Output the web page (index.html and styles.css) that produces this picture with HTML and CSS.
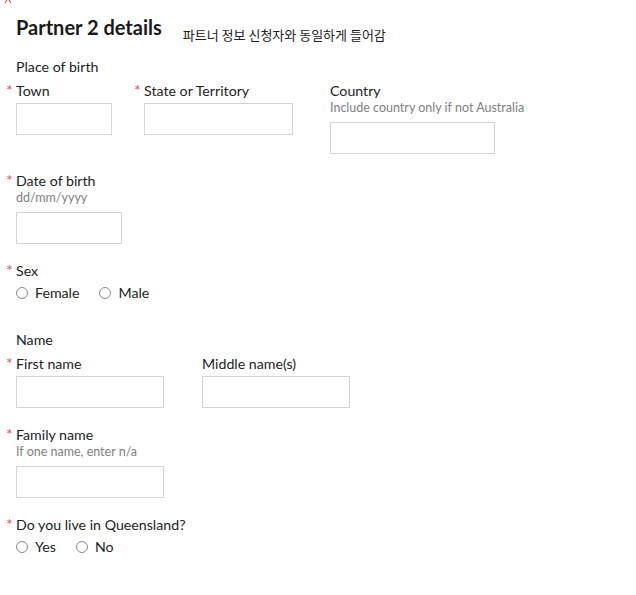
FILE: index.html
```html
<!DOCTYPE html>
<html lang="en">
<head>
    <meta charset="UTF-8"/>
    <meta name="viewport" content="width=device-width, initial-scale=1.0"/>
    <title>Partner 2 details</title>

    <link rel="stylesheet" href="styles.css">
</head>
<body>

<div class="cut-mark">
    <svg width="12" height="4" viewBox="0 0 12 4">
        <path d="M7 0 L5 3 M9 0 L11 3" stroke="#e05555" stroke-width="1.2" fill="none"/>
    </svg>
</div>

<main class="form">
    <div class="section-head">
        <h2>Partner 2 details</h2>
        <span class="note">파트너 정보 신청자와 동일하게 들어감</span>
    </div>

    <div class="group">
        <div class="group-title">Place of birth</div>
        <div class="row">
            <div class="field col-town">
                <label for="town" class="required">Town</label>
                <input type="text" id="town" class="input w-96"/>
            </div>
            <div class="field col-state">
                <label for="state" class="required">State or Territory</label>
                <input type="text" id="state" class="input w-149"/>
            </div>
            <div class="field">
                <label for="country">Country</label>
                <div class="hint">Include country only if not Australia</div>
                <input type="text" id="country" class="input w-165"/>
            </div>
        </div>
    </div>

    <div class="field">
        <label for="dob" class="required">Date of birth</label>
        <div class="hint">dd/mm/yyyy</div>
        <input type="text" id="dob" class="input w-106"/>
    </div>

    <div class="field">
        <label class="required">Sex</label>
        <div class="radio-row">
            <label class="radio"><span class="circle"></span>Female</label>
            <label class="radio"><span class="circle"></span>Male</label>
        </div>
    </div>

    <div class="group group-spaced">
        <div class="group-title">Name</div>
        <div class="row">
            <div class="field col-first">
                <label for="first-name" class="required">First name</label>
                <input type="text" id="first-name" class="input w-148"/>
            </div>
            <div class="field">
                <label for="middle-name">Middle name(s)</label>
                <input type="text" id="middle-name" class="input w-148"/>
            </div>
        </div>
    </div>

    <div class="field">
        <label for="family-name" class="required">Family name</label>
        <div class="hint">If one name, enter n/a</div>
        <input type="text" id="family-name" class="input w-148"/>
    </div>

    <div class="field">
        <label class="required">Do you live in Queensland?</label>
        <div class="radio-row">
            <label class="radio"><span class="circle"></span>Yes</label>
            <label class="radio"><span class="circle"></span>No</label>
        </div>
    </div>
</main>

</body>
</html>
```

FILE: styles.css
```css
:root {
    --text-color: #222222;
    --hint-color: #808080;
    --border-color: #d4d4d4;
    --required-color: #e05555;
}

* {
    margin: 0;
    padding: 0;
    box-sizing: border-box;
}

body {
    font-family: 'Lato', 'Open Sans', sans-serif;
    font-size: 14.2px;
    line-height: 18px;
    color: var(--text-color);
    background-color: #ffffff;
}

.cut-mark {
    height: 4px;
    overflow: hidden;
}

.cut-mark svg {
    display: block;
}

.form {
    padding: 11px 16px 0 16px;
}

.section-head {
    display: flex;
    align-items: flex-end;
    gap: 21px;
}

.section-head h2 {
    font-size: 20px;
    font-weight: 700;
    line-height: 24px;
    margin-bottom: 3px;
    color: #1a1a1a;
}

.note {
    font-family: 'Noto Sans CJK KR', sans-serif;
    font-size: 13px;
    line-height: 14px;
    color: #222222;
}

.group {
    margin-top: 16px;
}

.group-spaced {
    margin-top: 29px;
}

.group-title {
    margin-bottom: 6px;
}

.row {
    display: flex;
    align-items: flex-start;
}

.field {
    margin-top: 18px;
}

.row .field,
.group > .field {
    margin-top: 0;
}

.col-town {
    width: 128px;
}

.col-state {
    width: 186px;
}

.col-first {
    width: 186px;
}

label {
    display: block;
}

label.required::before {
    content: '*';
    display: inline-block;
    width: 10px;
    margin-left: -10px;
    color: var(--required-color);
    font-size: 16px;
    line-height: 16px;
}

.hint {
    font-size: 12.5px;
    line-height: 16px;
    color: var(--hint-color);
    margin-bottom: 6px;
}

.input {
    display: block;
    height: 32px;
    margin-top: 3px;
    border: 1px solid var(--border-color);
    background-color: #ffffff;
    font-family: inherit;
    font-size: 14px;
}

.w-96 { width: 96px; }
.w-106 { width: 106px; }
.w-148 { width: 148px; }
.w-149 { width: 149px; }
.w-165 { width: 165px; }

.radio-row {
    display: flex;
    gap: 20px;
    margin-top: 4px;
}

.radio {
    display: flex;
    align-items: center;
    gap: 7px;
}

.circle {
    width: 12px;
    height: 12px;
    border: 1px solid #8a8a8a;
    border-radius: 50%;
}
```
